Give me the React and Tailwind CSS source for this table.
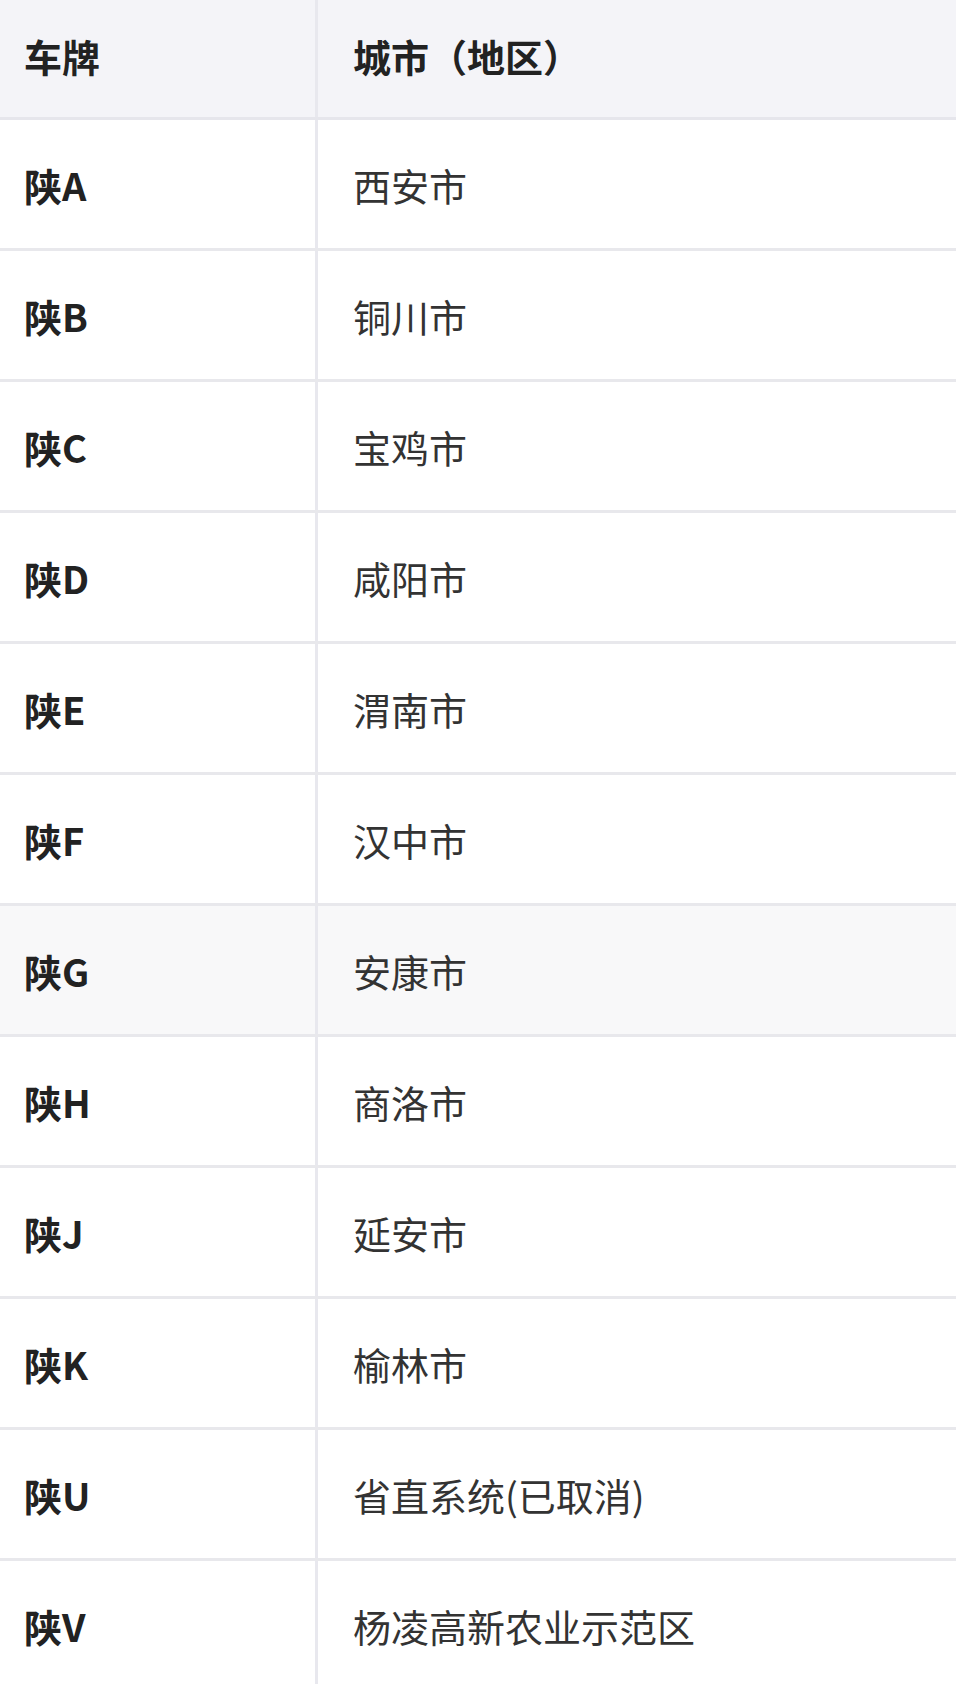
import React from "react";

const rows = [
  ["陕A", "西安市"],
  ["陕B", "铜川市"],
  ["陕C", "宝鸡市"],
  ["陕D", "咸阳市"],
  ["陕E", "渭南市"],
  ["陕F", "汉中市"],
  ["陕G", "安康市"],
  ["陕H", "商洛市"],
  ["陕J", "延安市"],
  ["陕K", "榆林市"],
  ["陕U", "省直系统(已取消)"],
  ["陕V", "杨凌高新农业示范区"],
];

const font = { fontFamily: '"Noto Sans CJK SC", "Noto Sans", sans-serif' };

const App = () => (
  <div className="w-[956px] h-[1684px] overflow-hidden bg-white" style={font}>
    <div className="flex h-[120px] bg-[#f4f4f8] border-b-[3px] border-[#e6e6ec]">
      <div className="w-[318px] shrink-0 border-r-[3px] border-[#e8e8ee] flex items-center pl-[24px] pb-[6px] text-[38px] font-bold text-[#222]">
        车牌
      </div>
      <div className="flex-1 flex items-center pl-[35px] pb-[6px] text-[38px] font-bold text-[#222]">
        城市（地区）
      </div>
    </div>
    {rows.map(([plate, city], i) => (
      <div
        key={plate}
        className={
          "flex h-[131px] border-b-[3px] border-[#e8e8ec] " +
          (i === 6 ? "bg-[#f8f8f9]" : "bg-white")
        }
      >
        <div className="w-[318px] shrink-0 border-r-[3px] border-[#e8e8ee] flex items-center pl-[24px] text-[38px] font-bold text-[#222]">
          {plate}
        </div>
        <div className="flex-1 flex items-center pl-[35px] text-[38px] text-[#333]">
          {city}
        </div>
      </div>
    ))}
  </div>
);

export default App;
